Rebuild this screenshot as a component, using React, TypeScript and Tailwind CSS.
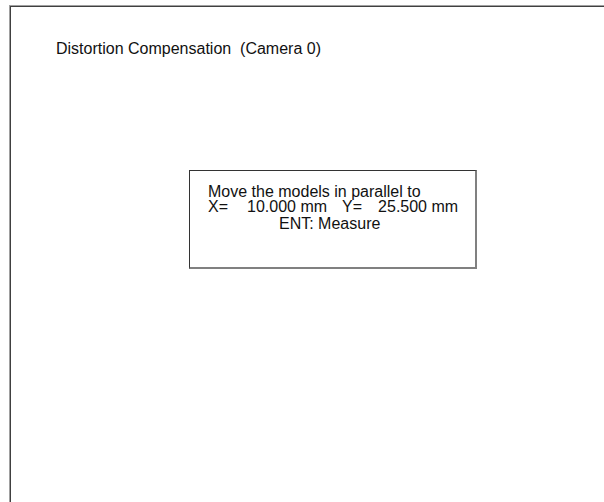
const font = { fontFamily: '"Liberation Sans", Arial, sans-serif' }

export const App = () => {
  return (
    <div className="h-[502px] w-[604px] overflow-hidden bg-white pl-[9px] pt-[5px] text-[16px] text-[#111]" style={font}>
      <div className="h-full w-full border-l border-t border-[#a0a0a0]">
        <div className="h-full w-full border-l border-t border-[#404040] pl-[45px] pt-[33px]">
          <p className="leading-[18px]">Distortion Compensation&nbsp;&nbsp;(Camera 0)</p>

          <div className="ml-[133px] mt-[112px] h-[99px] w-[288px] border-b-2 border-l border-r-2 border-t border-b-[#808080] border-l-[#333] border-r-[#808080] border-t-[#333] pl-[18px] pt-[13px]">
            <p className="leading-[15px]">Move the models in parallel to</p>
            <div className="flex leading-[16px]">
              <span>X=</span>
              <span className="ml-[19px]">10.000 mm</span>
              <span className="ml-[15px]">Y=</span>
              <span className="ml-[16px]">25.500 mm</span>
            </div>
            <p className="ml-[71px] mt-[1px] leading-[16px]">ENT: Measure</p>
          </div>
        </div>
      </div>
    </div>
  )
}

export default App
